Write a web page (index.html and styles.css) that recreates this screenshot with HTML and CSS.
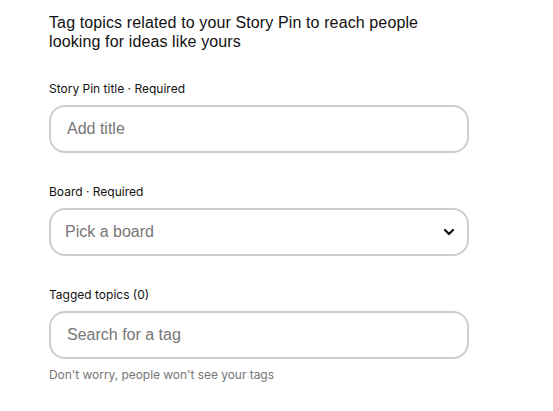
FILE: index.html
```html
<!DOCTYPE html>
<html>
<head>
<meta charset="utf-8">
<link rel="stylesheet" href="styles.css">
</head>
<body>
<div class="form">
  <p class="intro">Tag topics related to your Story Pin to reach people looking for ideas like yours</p>
  <div class="field">
    <label class="label">Story Pin title · Required</label>
    <div class="box"><span class="placeholder">Add title</span></div>
  </div>
  <div class="field">
    <label class="label">Board · Required</label>
    <div class="box select"><span class="placeholder">Pick a board</span>
      <svg class="chev" width="12" height="12" viewBox="0 0 12 12"><path d="M2 4 L6 8 L10 4" fill="none" stroke="#111" stroke-width="2.2" stroke-linecap="round" stroke-linejoin="round"/></svg>
    </div>
  </div>
  <div class="field">
    <label class="label">Tagged topics (0)</label>
    <div class="box"><span class="placeholder">Search for a tag</span></div>
    <p class="help">Don't worry, people won't see your tags</p>
  </div>
</div>
</body>
</html>
```
FILE: styles.css
```css
html, body { margin: 0; padding: 0; background: #fff; }
body { font-family: "Liberation Sans", Arial, sans-serif; color: #111; }
.form { padding: 13px 0 0 49px; width: 420px; display: flex; flex-direction: column; gap: 31px; }
.intro { margin: 0 0 -1px 0; font-size: 16px; line-height: 19px; width: 400px; letter-spacing: 0.12px; }
.field { display: flex; flex-direction: column; gap: 8px; }
.label { font-family: Inter, "Liberation Sans", sans-serif; font-size: 12px; line-height: 16px; display: block; color: #111; }
.box { box-sizing: border-box; height: 48px; border: 2px solid #cdcdcd; border-radius: 16px; display: flex; align-items: center; padding: 0 16px; }
.select { padding: 0 12px 0 14px; justify-content: space-between; }
.placeholder { font-size: 16px; color: #767676; }
.help { margin: 0; font-family: Inter, "Liberation Sans", sans-serif; font-size: 12px; line-height: 16px; color: #767676; letter-spacing: -0.05px; }
```
